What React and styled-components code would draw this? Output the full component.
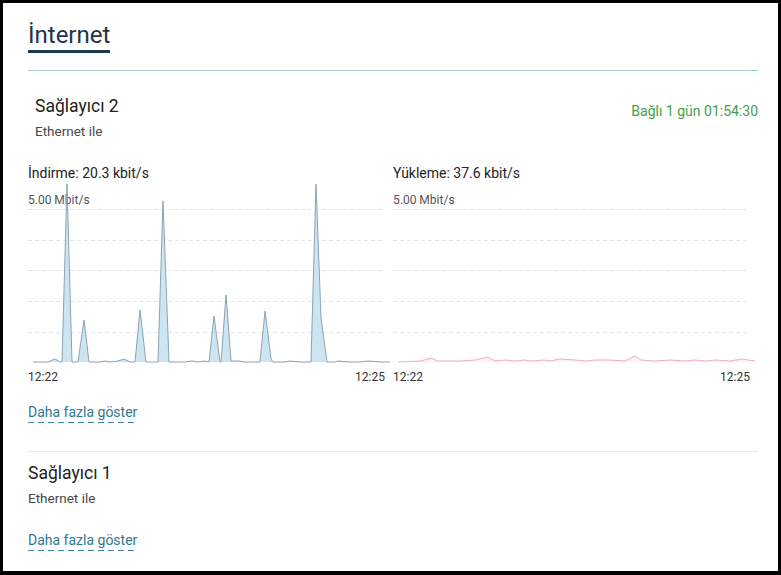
import React from "react";
import styled, { createGlobalStyle } from "styled-components";

const Global = createGlobalStyle`
  html, body { margin: 0; padding: 0; background: #fff; }
  body { font-family: Roboto, "Noto Sans", Arial, sans-serif; }
  * { box-sizing: border-box; }
`;

const Frame = styled.div`
  width: 781px;
  height: 575px;
  border: 3px solid #000;
  border-bottom-width: 4px;
  background: #fff;
  overflow: hidden;
`;

const Content = styled.div`
  padding: 18px 20px 0 25px;
`;

const Title = styled.h1`
  display: inline-block;
  margin: 0;
  font-size: 24px;
  font-weight: 400;
  line-height: 28px;
  color: #1d3547;
  border-bottom: 3px solid #1b3a50;
  padding-bottom: 1px;
`;

const Divider = styled.div`
  height: 1px;
  background: #a7cad8;
  margin-top: 17px;
`;

const Section = styled.section`
  padding-left: ${(p) => p.$indent || 0}px;
  padding-top: ${(p) => p.$top || 0}px;
`;

const Header = styled.div`
  display: flex;
  justify-content: space-between;
  align-items: flex-start;
`;

const Name = styled.div`
  font-size: 17.5px;
  line-height: 22px;
  color: #222;
`;

const Sub = styled.div`
  font-size: 13.5px;
  line-height: 18px;
  color: #474747;
  margin-top: 5px;
`;

const Status = styled.div`
  font-size: 14px;
  color: #43a047;
  margin-top: 8px;
`;

const Charts = styled.div`
  display: grid;
  grid-template-columns: 362px 362px;
  column-gap: 3px;
  margin-top: 24px;
`;

const ChartBlock = styled.div`
  display: flex;
  flex-direction: column;
`;

const Rate = styled.div`
  font-size: 14px;
  line-height: 18px;
  color: #222;
`;

const Scale = styled.div`
  font-size: 12px;
  line-height: 14px;
  color: #555;
  margin-top: 11px;
`;

const Plot = styled.svg`
  display: block;
  overflow: visible;
  margin-top: 1px;
`;

const Times = styled.div`
  display: flex;
  justify-content: space-between;
  font-size: 12px;
  color: #333;
  margin-top: 6px;
  padding-right: 5px;
`;

const More = styled.a`
  display: inline-block;
  font-size: 14px;
  line-height: 18px;
  color: #2f7895;
  text-decoration: none;
  padding-bottom: 2px;
  background-image: repeating-linear-gradient(to right, #3a84a0 0 6px, transparent 6px 10px);
  background-size: 100% 1.5px;
  background-position: left bottom;
  background-repeat: no-repeat;
  margin-top: ${(p) => p.$top}px;
  cursor: pointer;
`;

const Separator = styled.div`
  height: 1px;
  background: #e2eaef;
  margin-top: 28px;
`;

const downPts = [
  [33, 361], [40, 361], [48, 361], [55, 358], [60, 361], [62, 361], [67, 183], [72, 361],
  [78, 361], [84, 319], [89, 361], [100, 361], [105, 360], [110, 361], [118, 360], [124, 358],
  [130, 361], [135, 361], [140, 309], [146, 361], [152, 361], [158, 361], [163, 200], [169, 361],
  [175, 361], [185, 361], [192, 360], [198, 361], [205, 360], [209, 361], [214, 315], [220, 361],
  [221, 361], [226, 294], [231, 360], [238, 360], [245, 361], [255, 361], [260, 361], [265, 310],
  [271, 358], [273, 361], [285, 361], [290, 360], [300, 361], [311, 361], [316, 183], [321, 317],
  [327, 361], [335, 361], [338, 360], [350, 361], [360, 361], [368, 360], [380, 361], [390, 361],
];

const upPts = [
  [398, 361], [420, 360], [432, 357], [437, 360], [460, 360], [475, 359], [488, 356], [495, 360],
  [505, 359], [515, 360], [525, 359], [530, 360], [545, 359], [550, 360], [560, 358], [575, 359],
  [585, 360], [595, 359], [610, 359], [625, 360], [635, 355], [641, 359], [655, 360], [670, 359],
  [685, 360], [695, 359], [705, 360], [715, 359], [730, 360], [742, 358], [755, 360],
];

const TOP = 207;

function Chart({ label, pts, originX, stroke, fill }) {
  const local = pts.map(([x, y]) => [x - originX, y - TOP]);
  const line = local.map(([x, y]) => `${x},${y}`).join(" ");
  const first = local[0][0];
  const last = local[local.length - 1][0];
  const area = `${first},154 ${line} ${last},154`;
  const grid = [1, 32, 62, 93, 124];
  return (
    <ChartBlock>
      <Rate>{label}</Rate>
      <Scale>5.00 Mbit/s</Scale>
      <Plot width="362" height="156" viewBox="0 0 362 156">
        {grid.map((g) => (
          <line key={g} x1="0" x2="357" y1={g + 0.5} y2={g + 0.5} stroke="#dce6ec" strokeWidth="1" strokeDasharray="4 3" />
        ))}
        <polygon points={area} fill={fill} />
        <polyline points={line} fill="none" stroke={stroke} strokeWidth="1" strokeLinejoin="round" />
      </Plot>
      <Times>
        <span>12:22</span>
        <span>12:25</span>
      </Times>
    </ChartBlock>
  );
}

export default function App() {
  return (
    <>
      <Global />
      <Frame>
        <Content>
          <Title>İnternet</Title>
          <Divider />
          <Section $indent={7} $top={24}>
            <Header>
              <div>
                <Name>Sağlayıcı 2</Name>
                <Sub>Ethernet ile</Sub>
              </div>
              <Status>Bağlı 1 gün 01:54:30</Status>
            </Header>
          </Section>
          <Charts>
            <Chart label="İndirme: 20.3 kbit/s" pts={downPts} originX={28} stroke="#8ca3b3" fill="#cde5f1" />
            <Chart label="Yükleme: 37.6 kbit/s" pts={upPts} originX={393} stroke="#f0b0b8" fill="#fdf0f2" />
          </Charts>
          <More $top={19}>Daha fazla göster</More>
          <Separator />
          <Section $top={10}>
            <Name>Sağlayıcı 1</Name>
            <Sub>Ethernet ile</Sub>
            <More $top={24}>Daha fazla göster</More>
          </Section>
        </Content>
      </Frame>
    </>
  );
}
